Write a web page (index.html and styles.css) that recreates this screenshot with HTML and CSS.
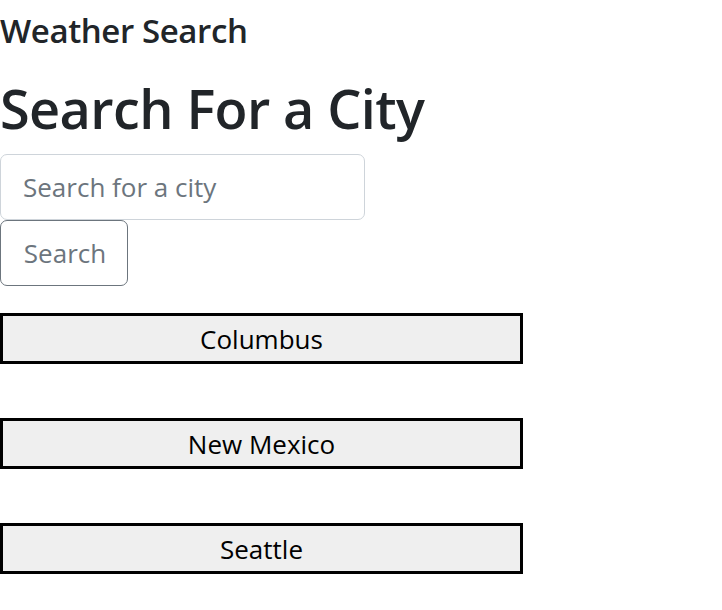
FILE: index.html
```html
<!DOCTYPE html>
<html>
<head>
<meta charset="utf-8">
<link rel="stylesheet" href="styles.css">
</head>
<body>
<header class="brand">Weather Search</header>
<main class="search">
  <h1 class="title">Search For a City</h1>
  <input class="city-input" type="text" placeholder="Search for a city">
  <button class="search-btn" type="button">Search</button>
  <div class="history">
    <button class="history-btn" type="button">Columbus</button>
    <button class="history-btn" type="button">New Mexico</button>
    <button class="history-btn" type="button">Seattle</button>
  </div>
</main>
</body>
</html>
```
FILE: styles.css
```css
* { box-sizing: border-box; }
body {
  margin: 0;
  font-family: "Open Sans", "Noto Sans", sans-serif;
  color: #212529;
  background: #fff;
}
.brand {
  font-size: 33px;
  font-weight: 600;
  line-height: 46px;
  height: 62px;
  padding-top: 8px;
  letter-spacing: -0.4px;
}
.search {
  display: flex;
  flex-direction: column;
  align-items: flex-start;
}
.title {
  margin: 0;
  font-size: 54px;
  font-weight: 600;
  line-height: 92px;
  letter-spacing: -0.6px;
}
.city-input {
  width: 365px;
  height: 66px;
  padding: 0 22px;
  font-family: inherit;
  font-size: 26px;
  color: #212529;
  border: 1px solid #ced4da;
  border-radius: 7px;
  outline: none;
}
.city-input::placeholder { color: #6c757d; }
.search-btn {
  width: 128px;
  height: 66px;
  padding: 0 0 0 2px;
  font-family: inherit;
  font-size: 26px;
  color: #6c757d;
  background: #fff;
  border: 1px solid #6c757d;
  border-radius: 7px;
}
.history {
  display: flex;
  flex-direction: column;
  gap: 54px;
  margin-top: 27px;
}
.history-btn {
  width: 523px;
  height: 51px;
  font-family: inherit;
  font-size: 26px;
  color: #000;
  background: #efefef;
  border: 3px solid #000;
  padding: 0;
}
```
